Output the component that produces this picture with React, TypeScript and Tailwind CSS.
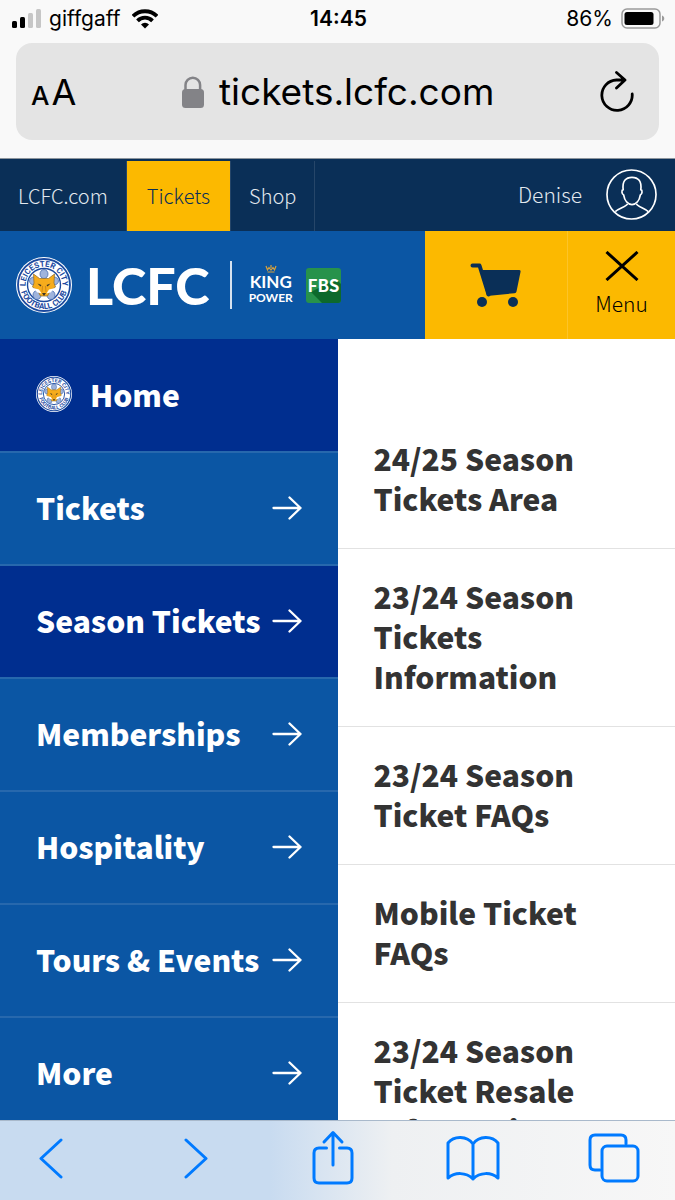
import { useId } from "react";

const siteTabs = [
  { name: "LCFC.com", active: false },
  { name: "Tickets", active: true },
  { name: "Shop", active: false },
];

const menuItems = [
  { name: "Tickets", active: false },
  { name: "Season Tickets", active: true },
  { name: "Memberships", active: false },
  { name: "Hospitality", active: false },
  { name: "Tours & Events", active: false },
  { name: "More", active: false },
];

const subItems = [
  "24/25 Season Tickets Area",
  "23/24 Season Tickets Information",
  "23/24 Season Ticket FAQs",
  "Mobile Ticket FAQs",
  "23/24 Season Ticket Resale Information",
];

function Crest({ className }: { className: string }) {
  const id = useId();
  return (
    <svg viewBox="0 0 56 56" className={className} aria-hidden="true">
      <defs>
        <path id={id + "top"} d="M10.700 34.300a18.400 18.400 0 1 1 34.600 0" />
        <path id={id + "bottom"} d="M4.300 26a23.800 23.800 0 1 0 47.400 0" />
      </defs>
      <circle cx="28" cy="28" r="28" fill="#fff" />
      <circle cx="28" cy="28" r="26" fill="none" stroke="#1c4a9f" strokeWidth="1.800" />
      <circle cx="28" cy="28" r="16.500" fill="#fff" stroke="#1c4a9f" strokeWidth="1.400" />
      <g fill="#9fb4dc" stroke="#3a62ab" strokeWidth="0.700">
        <ellipse cx="28" cy="17" rx="4" ry="4.500" />
        <ellipse cx="18" cy="24" rx="4.500" ry="4" />
        <ellipse cx="38" cy="24" rx="4.500" ry="4" />
        <ellipse cx="21" cy="38" rx="4" ry="4.500" />
        <ellipse cx="35" cy="38" rx="4" ry="4.500" />
      </g>
      <path
        d="M17.500 17l6 4.500h9l6-4.500-.5 9 1.500 4-5 3.500-3 5.500h-7l-3-5.500-5-3.500 1.500-4z"
        fill="#f6ac1c"
        stroke="#8b6a2b"
        strokeWidth="0.700"
      />
      <path d="M17 31l6 1.500 2.500 4-4-1zM39 31l-6 1.500-2.500 4 4-1z" fill="#fff" />
      <path d="M21.500 26.500l4 1.500-1 1.500zM34.500 26.500l-4 1.500 1 1.500zM26 36h4l-2 3z" fill="#3b3426" />
      <path d="M26.500 29l-.5 6M29.500 29l.5 6" stroke="#c47d18" strokeWidth="0.800" />
      <g fill="#1c4a9f" fontFamily="Roboto" fontWeight="700" fontSize="8" textAnchor="middle">
        <text>
          <textPath href={"#" + id + "top"} startOffset="50%">
            LEICESTER CITY
          </textPath>
        </text>
        <text>
          <textPath href={"#" + id + "bottom"} startOffset="50%">
            FOOTBALL CLUB
          </textPath>
        </text>
      </g>
    </svg>
  );
}

function Arrow() {
  return (
    <svg
      viewBox="0 0 30 24"
      className="w-[30px] h-6 shrink-0"
      fill="none"
      stroke="#fff"
      strokeWidth="2.300"
      strokeLinecap="round"
      strokeLinejoin="round"
      aria-hidden="true"
    >
      <path d="M1.500 12h27M17.500 1.500l11 10.500-11 10.500" />
    </svg>
  );
}

function StatusBar() {
  return (
    <div className="grid grid-cols-3 items-center h-[37px] pl-3 pr-[10px] text-[21px] text-black">
      <div className="flex items-center">
        <svg viewBox="0 0 30 20" className="w-[30px] h-5 mr-[7px]" aria-hidden="true">
          <rect x="0" y="12" width="5" height="7" rx="1.500" />
          <rect x="8" y="8" width="5" height="11" rx="1.500" />
          <rect x="16" y="4" width="5" height="15" rx="1.500" fill="#c6c6c6" />
          <rect x="24" y="0" width="5" height="19" rx="1.500" fill="#c6c6c6" />
        </svg>
        <span>giffgaff</span>
        <svg viewBox="0 0 26 20" className="w-[26px] h-5 ml-3" fill="none" stroke="#000" strokeWidth="3.800" aria-hidden="true">
          <path d="M1 7.200a17 17 0 0 1 24 0" />
          <path d="M5.500 11.800a10.500 10.500 0 0 1 15 0" />
          <path d="M13 19.500l-4-4a5.700 5.700 0 0 1 8 0z" fill="#000" stroke="none" />
        </svg>
      </div>
      <span className="text-center font-semibold">14:45</span>
      <div className="flex items-center justify-end gap-2">
        <span>86%</span>
        <svg viewBox="0 0 44 22" className="w-11 h-[22px]" aria-hidden="true">
          <rect x="1" y="1" width="38" height="19" rx="5" fill="none" stroke="#9a9a9a" strokeWidth="1.500" />
          <rect x="3.500" y="4" width="29" height="13" rx="2.500" />
          <path d="M41 7.500c3 1 3 5 0 6z" fill="#9a9a9a" />
        </svg>
      </div>
    </div>
  );
}

function AddressBar() {
  return (
    <div className="px-4 pt-[6px] pb-[18px]">
      <div className="flex items-center justify-between h-[97px] rounded-2xl bg-[#e4e4e4] pl-[15px] pr-6 text-black">
        <button aria-label="Text size" className="flex items-baseline gap-[2px] leading-none">
          <span className="text-[26px] font-medium">A</span>
          <span className="text-[36px]">A</span>
        </button>
        <div className="flex items-center gap-[14px]">
          <svg viewBox="0 0 24 32" className="w-6 h-8" aria-hidden="true">
            <path d="M4.500 15V9a7.300 7.300 0 0 1 14.600 0v6" fill="none" stroke="#838387" strokeWidth="2.500" />
            <rect x="1" y="13" width="22" height="19" rx="3.500" fill="#838387" />
          </svg>
          <span className="text-[37px]">tickets.lcfc.com</span>
        </div>
        <button aria-label="Reload">
          <svg
            viewBox="0 0 36 42"
            className="w-9 h-[42px]"
            fill="none"
            stroke="#000"
            strokeWidth="2.800"
            strokeLinecap="round"
            strokeLinejoin="round"
            aria-hidden="true"
          >
            <path d="M17.500 1.500l8.500 7.500-8.500 8M25.500 9H17.500a15.200 15.200 0 1 0 15.700 14" />
          </svg>
        </button>
      </div>
    </div>
  );
}

function SiteTabs() {
  return (
    <nav className="flex h-[72px] bg-[#0a2f57] pt-[2px] font-['Noto_Sans_CJK_SC','Noto_Sans',sans-serif] text-xl font-light text-[#e3e9ef]">
      {siteTabs.map((tab) => (
        <a
          key={tab.name}
          href="#"
          className={
            tab.active
              ? "flex items-center px-5 bg-[#fcb900] text-[#0a2f57] border-r border-[#264669]"
              : "flex items-center px-[18px] border-r border-[#264669]"
          }
        >
          {tab.name}
        </a>
      ))}
      <a href="#" className="flex items-center gap-6 ml-auto pr-[18px] pb-[3px] text-[21px]">
        Denise
        <svg viewBox="0 0 52 52" className="w-[51px] h-[51px]" fill="none" stroke="#fff" strokeWidth="1.700" aria-hidden="true">
          <circle cx="26" cy="26" r="25" />
          <path d="M17.500 21c-1-8.500 2.500-12.500 9-12.500s10 4 9 12.500c2 .5 1.500 4.500-.5 5.500-1 6-4.500 9.800-8.500 9.800s-7.500-3.800-8.500-9.800c-2-1-2.500-5-.5-5.500z" />
          <path d="M22 35.500c-1 3-9 4.500-12.500 8M31 35.500c1 3 8.500 4.500 12 8" />
        </svg>
      </a>
    </nav>
  );
}

function LogoBar() {
  return (
    <div className="flex h-[108px] bg-[#0b56a4] text-white">
      <a href="#" aria-label="LCFC home" className="flex items-center pl-4 font-['Lato',sans-serif]">
        <Crest className="w-14 h-14" />
        <span className="ml-[14px] text-[52px] leading-none font-black">LCFC</span>
        <span className="ml-5 w-[2px] h-12 bg-[#d6e2f0]"></span>
        <span className="flex flex-col items-center ml-[17px] font-bold">
          <svg viewBox="0 0 12 8" className="w-3 h-2" fill="none" stroke="#d9a13b" strokeWidth="1.200" aria-hidden="true">
            <path d="M1 1l1.500 4L4 2.500 6 5l2-2.500L9.500 5 11 1M2.500 7h7M6 0v3" />
          </svg>
          <span className="text-[17px] leading-[18px]">KING</span>
          <span className="text-xs leading-[14px]">POWER</span>
        </span>
        <svg viewBox="0 0 35 35" className="w-[35px] h-[35px] ml-[13px]" aria-hidden="true">
          <rect width="35" height="35" rx="3" fill="#27924b" />
          <path d="M5 24l11 11h16a3 3 0 0 0 3-3V16l-5-5z" fill="#0d692c" />
          <text x="17.500" y="24" textAnchor="middle" fontFamily="Noto Sans CJK SC" fontWeight="700" fontSize="17" fill="#fff">
            FBS
          </text>
        </svg>
      </a>
      <div className="flex ml-auto bg-[#fcb900]">
        <button aria-label="Basket" className="flex items-center justify-center w-[143px] border-r border-[#fdc428]">
          <svg viewBox="0 0 52 44" className="w-[52px] h-11" fill="#0a2f57" aria-hidden="true">
            <path
              d="M2.500 2.500h7l9 29"
              fill="none"
              stroke="#0a2f57"
              strokeWidth="4"
              strokeLinecap="round"
              strokeLinejoin="round"
            />
            <path d="M11 7h38q2 0 1.500 2l-4 19.500q-.3 1.500-2 1.700L17 33z" />
            <circle cx="12" cy="39" r="5" />
            <circle cx="43" cy="39" r="5" />
          </svg>
        </button>
        <button className="flex flex-col items-center justify-center w-[107px] text-black font-['Noto_Sans_CJK_SC','Noto_Sans',sans-serif] text-[21px] font-light leading-8">
          <svg viewBox="0 0 34 30" className="w-[34px] h-[30px] mb-[6px]" stroke="#000" strokeWidth="3" aria-hidden="true">
            <path d="M1.500 1l31 28M32.500 1l-31 28" />
          </svg>
          Menu
        </button>
      </div>
    </div>
  );
}

function Toolbar() {
  return (
    <div className="flex items-center justify-between h-20 shrink-0 border-t border-[#a9b9cb] bg-linear-to-r from-[#c8dbf0] from-40% via-[#eef0f2] via-58% to-[#f7f7f7] pr-[34px] pb-[6px] pl-6">
      <button aria-label="Back" className="flex justify-center w-[54px]">
        <svg viewBox="0 0 24 42" className="w-6 h-[42px]" fill="none" stroke="#007aff" strokeWidth="3" strokeLinecap="round" strokeLinejoin="round">
          <path d="M22 3L2 21.500 22 40" />
        </svg>
      </button>
      <button aria-label="Forward" className="flex justify-center w-[54px] pl-2">
        <svg viewBox="0 0 24 42" className="w-6 h-[42px]" fill="none" stroke="#007aff" strokeWidth="3" strokeLinecap="round" strokeLinejoin="round">
          <path d="M2 3l20 18.500L2 40" />
        </svg>
      </button>
      <button aria-label="Share" className="flex justify-center w-[54px]">
        <svg viewBox="0 0 42 56" className="w-[42px] h-14" fill="none" stroke="#007aff" strokeWidth="3" strokeLinecap="round" strokeLinejoin="round">
          <path d="M14.500 18H7q-5 0-5 5v25q0 5 5 5h28q5 0 5-5V23q0-5-5-5h-7.500M21 35V3M12 12l9-9.500 9 9.500" />
        </svg>
      </button>
      <button aria-label="Bookmarks" className="flex justify-center w-[54px]">
        <svg viewBox="0 0 54 46" className="w-[54px] h-[46px]" fill="none" stroke="#007aff" strokeWidth="3" strokeLinecap="round" strokeLinejoin="round">
          <path d="M27 9C21 .5 8 .5 2 8v35c7-6 18-6 25 1 7-7 18-7 25-1V8C46 .5 33 .5 27 9zM27 9v35" />
        </svg>
      </button>
      <button aria-label="Tabs" className="flex justify-center w-[54px]">
        <svg viewBox="0 0 52 50" className="w-[52px] h-[50px]" fill="none" stroke="#007aff" strokeWidth="3" strokeLinecap="round" strokeLinejoin="round">
          <rect x="14" y="13" width="36" height="35" rx="5" />
          <path d="M12 37H7q-5 0-5-5V7q0-5 5-5h26q5 0 5 5v4" />
        </svg>
      </button>
    </div>
  );
}

export default function App() {
  return (
    <div className="flex flex-col h-screen overflow-hidden bg-white font-['Inter',sans-serif]">
      <header className="shrink-0">
        <div className="bg-[#f9f9f9] border-b border-[#8d959d]">
          <StatusBar />
          <AddressBar />
        </div>
        <SiteTabs />
        <LogoBar />
      </header>

      <main className="grid grid-cols-2 flex-1 min-h-0 overflow-hidden font-['Noto_Sans_CJK_SC','Noto_Sans',sans-serif] text-[30px] font-black">
        {/* Main menu */}
        <nav className="bg-[#0b56a4] text-white">
          <a href="#" className="flex items-center gap-[18px] h-[114px] px-9 pb-[2px] bg-[#002e8f] border-b-2 border-[#2768ad]">
            <Crest className="w-9 h-9" />
            Home
          </a>
          {menuItems.map((item) => (
            <a
              key={item.name}
              href="#"
              className={
                item.active
                  ? "flex items-center justify-between h-[113px] px-9 pb-[2px] whitespace-nowrap bg-[#002e8f] border-b-2 border-[#2768ad]"
                  : "flex items-center justify-between h-[113px] px-9 pb-[2px] whitespace-nowrap border-b-2 border-[#2768ad]"
              }
            >
              {item.name}
              <Arrow />
            </a>
          ))}
        </nav>

        {/* Sub menu */}
        <nav className="pt-[72px] text-[#333] leading-10">
          {subItems.map((item) => (
            <a key={item} href="#" className="block pl-9 pr-20 pt-[27px] pb-[30px] border-b border-[#e2e2e2]">
              {item}
            </a>
          ))}
        </nav>
      </main>

      <Toolbar />
    </div>
  );
}
